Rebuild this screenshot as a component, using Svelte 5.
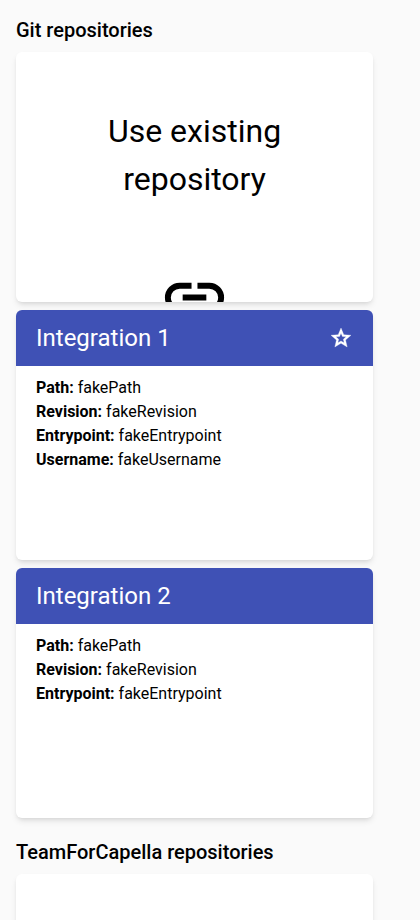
<script>
  const integrations = [
    {
      name: 'Integration 1',
      primary: true,
      fields: [
        ['Path', 'fakePath'],
        ['Revision', 'fakeRevision'],
        ['Entrypoint', 'fakeEntrypoint'],
        ['Username', 'fakeUsername'],
      ],
    },
    {
      name: 'Integration 2',
      primary: false,
      fields: [
        ['Path', 'fakePath'],
        ['Revision', 'fakeRevision'],
        ['Entrypoint', 'fakeEntrypoint'],
      ],
    },
  ];
</script>

<main>
  <h2>Git repositories</h2>
  <div class="cards">
    <section class="card create">
      <div class="title">Use existing<br />repository</div>
      <svg class="link" viewBox="0 -960 960 960" width="71" height="71">
        <path d="M440-280H280q-83 0-141.500-58.500T80-480q0-83 58.500-141.500T280-680h160v80H280q-50 0-85 35t-35 85q0 50 35 85t85 35h160v80ZM320-440v-80h320v80H320Zm200 160v-80h160q50 0 85-35t35-85q0-50-35-85t-85-35H520v-80h160q83 0 141.500 58.500T880-480q0 83-58.500 141.500T680-280H520Z" />
      </svg>
    </section>
    {#each integrations as item}
      <section class="card">
        <header>
          <span>{item.name}</span>
          {#if item.primary}
            <svg viewBox="0 -960 960 960" width="24" height="24">
              <path d="m354-287 126-76 126 77-33-144 111-96-146-13-58-136-58 135-146 13 111 97-33 143ZM233-120l65-281L80-590l288-25 112-265 112 265 288 25-218 189 65 281-247-149-247 149Z" />
            </svg>
          {/if}
        </header>
        <div class="content">
          {#each item.fields as [label, value]}
            <div><b>{label}:</b> {value}</div>
          {/each}
        </div>
      </section>
    {/each}
  </div>
  <h2 class="second">TeamForCapella repositories</h2>
  <section class="card create"></section>
</main>

<style>
  :global(body) {
    background: #fafafa;
    -webkit-font-smoothing: antialiased;
  }
  main {
    box-sizing: border-box;
    height: 920px;
    overflow: hidden;
    padding: 14px 16px 0;
    font: 16px/24px Roboto, sans-serif;
    color: #000;
  }
  h2 {
    margin: 0 0 6px;
    font-size: 20px;
    font-weight: 500;
    line-height: 32px;
  }
  .second {
    margin-top: 18px;
  }
  .cards {
    display: flex;
    flex-direction: column;
    gap: 8px;
  }
  .card {
    width: 357px;
    height: 250px;
    flex: none;
    overflow: hidden;
    border-radius: 6px;
    background: #fff;
    box-shadow: 0 4px 6px -1px rgba(0, 0, 0, 0.1), 0 2px 4px -2px rgba(0, 0, 0, 0.1);
  }
  .create {
    display: flex;
    flex-direction: column;
    align-items: center;
  }
  .title {
    margin-top: 55px;
    font-size: 32px;
    line-height: 48px;
    text-align: center;
  }
  .link {
    flex: none;
    margin-top: 59px;
  }
  header {
    box-sizing: border-box;
    height: 56px;
    padding: 0 20px;
    display: flex;
    align-items: center;
    justify-content: space-between;
    background: #3f51b5;
    color: #fff;
    font-size: 24px;
  }
  header svg {
    fill: currentColor;
    stroke: currentColor;
    stroke-width: 12;
  }
  .content {
    padding: 10px 20px;
  }
</style>
